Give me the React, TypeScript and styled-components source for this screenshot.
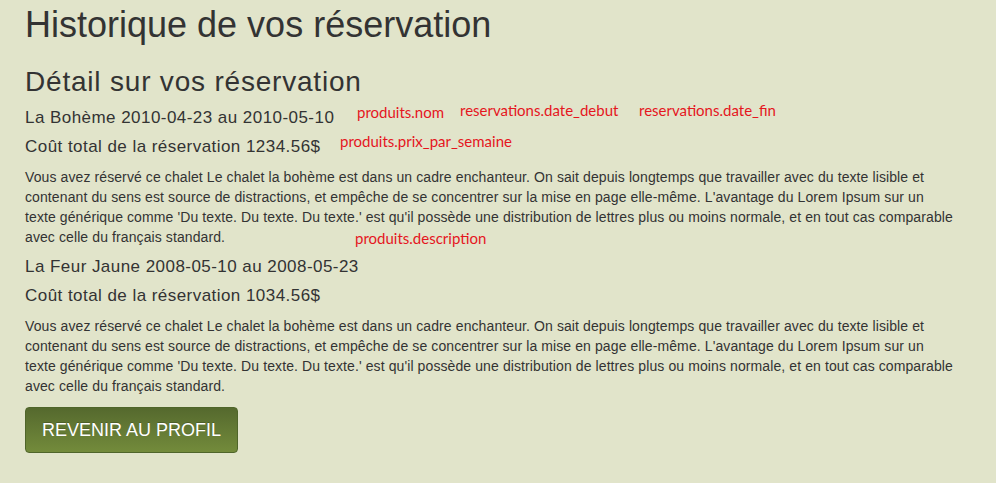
import { Fragment } from "react";
import styled, { createGlobalStyle } from "styled-components";

const GlobalStyle = createGlobalStyle`
  html, body {
    margin: 0;
    padding: 0;
    background: #e1e4ca;
  }
  body {
    font-family: "Liberation Sans", Arial, sans-serif;
    color: #333;
  }
`;

interface Reservation {
  nom: string;
  debut: string;
  fin: string;
  cout: string;
}

// lines broken where the original page breaks them
const description = [
  "Vous avez réservé ce chalet Le chalet la bohème est dans un cadre enchanteur. On sait depuis longtemps que travailler avec du texte lisible et",
  "contenant du sens est source de distractions, et empêche de se concentrer sur la mise en page elle-même. L'avantage du Lorem Ipsum sur un",
  "texte générique comme 'Du texte. Du texte. Du texte.' est qu'il possède une distribution de lettres plus ou moins normale, et en tout cas comparable",
  "avec celle du français standard.",
];

const reservations: Reservation[] = [
  { nom: "La Bohème", debut: "2010-04-23", fin: "2010-05-10", cout: "1234.56$" },
  { nom: "La Feur Jaune", debut: "2008-05-10", fin: "2008-05-23", cout: "1034.56$" },
];

export default function App() {
  return (
    <>
      <GlobalStyle />
      <Page>
        <Title>Historique de vos réservation</Title>
        <SubTitle>Détail sur vos réservation</SubTitle>
        {reservations.map((r, i) => (
          <Block key={r.nom}>
            <Line>
              {r.nom} {r.debut} au {r.fin}
            </Line>
            <Line>Coût total de la réservation {r.cout}</Line>
            <Description>
              {description.map((l, j) => (
                <Fragment key={j}>
                  {j > 0 && <br />}
                  {l}
                </Fragment>
              ))}
            </Description>
            {i === 0 && (
              <>
                <Note $x={332} $y={-5}>produits.nom</Note>
                <Note $x={435} $y={-7}>reservations.date_debut</Note>
                <Note $x={614} $y={-7}>reservations.date_fin</Note>
                <Note $x={315} $y={24}>produits.prix_par_semaine</Note>
                <Note $x={330} $y={121}>produits.description</Note>
              </>
            )}
          </Block>
        ))}
        <BackButton>REVENIR AU PROFIL</BackButton>
      </Page>
    </>
  );
}

const Page = styled.div`
  display: flex;
  flex-direction: column;
  align-items: flex-start;
  gap: 10px;
  padding: 4px 25px 30px;
  width: 946px;
`;

const Title = styled.h1`
  font-size: 36px;
  font-weight: normal;
  line-height: 41px;
  margin: 0 0 10px;
`;

const SubTitle = styled.h2`
  font-size: 28px;
  font-weight: normal;
  letter-spacing: 0.8px;
  line-height: 34px;
  margin: 0 0 -1px;
`;

const Block = styled.section`
  position: relative;
  display: flex;
  flex-direction: column;
  gap: 9px;
  width: 100%;
`;

const Line = styled.h4`
  font-size: 17px;
  font-weight: normal;
  letter-spacing: 0.45px;
  line-height: 20px;
  margin: 0;
`;

const Description = styled.p`
  font-size: 14px;
  letter-spacing: 0.1px;
  line-height: 20px;
  white-space: nowrap;
  margin: 1px 0 0;
`;

const Note = styled.span<{ $x: number; $y: number }>`
  position: absolute;
  left: ${(p) => p.$x}px;
  top: ${(p) => p.$y}px;
  font-family: Lato, "Open Sans", sans-serif;
  font-size: 15px;
  color: #e5161e;
  white-space: nowrap;
`;

const BackButton = styled.button`
  margin-top: 1px;
  height: 46px;
  padding: 0 16px;
  border: 1px solid #4f652a;
  border-radius: 4px;
  background: linear-gradient(#55692e, #738b3b);
  color: #fff;
  font-family: "Liberation Sans", Arial, sans-serif;
  font-size: 18px;
  text-shadow: 0 -1px 0 rgba(0, 0, 0, 0.2);
  cursor: pointer;
`;
